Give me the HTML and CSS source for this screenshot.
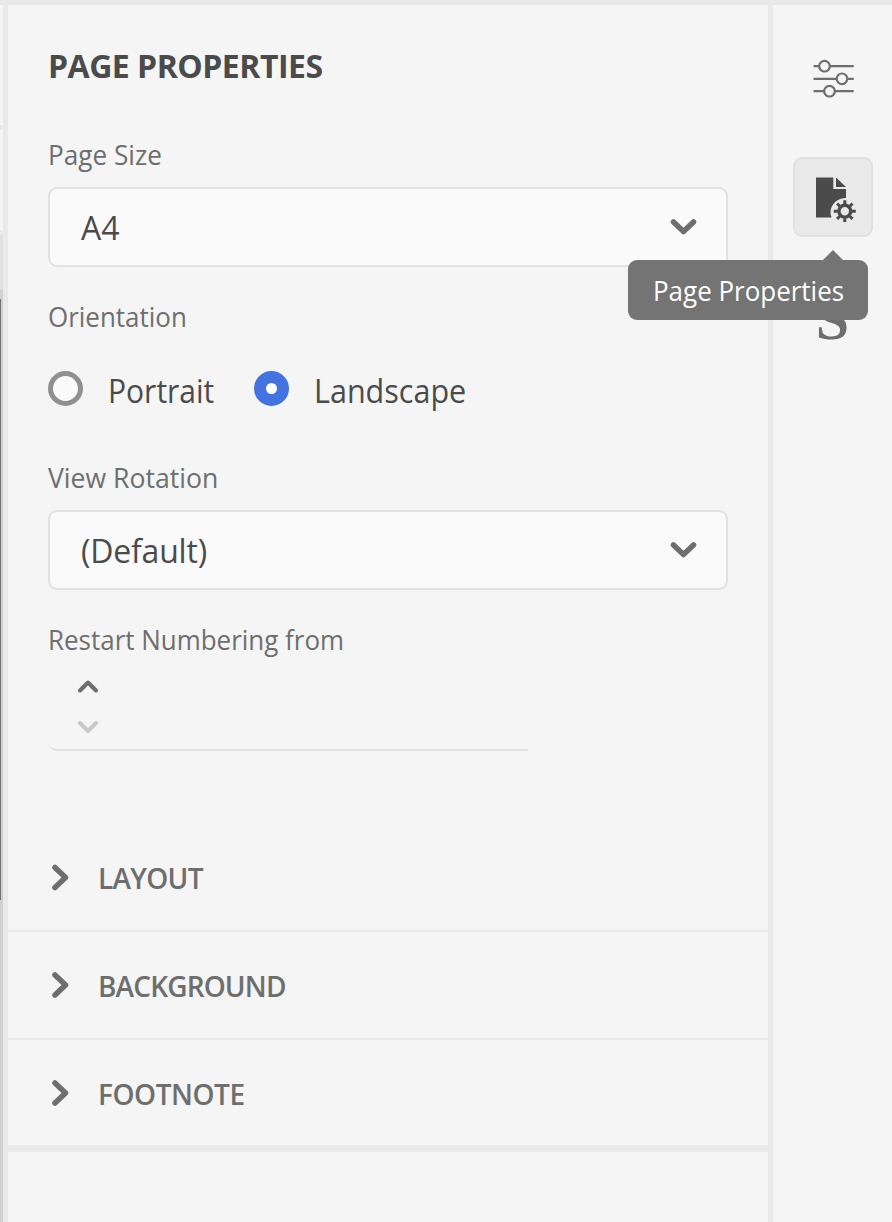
FILE: index.html
```html
<!DOCTYPE html>
<html lang="en">
<head>
<meta charset="utf-8">
<title>Page Properties</title>
<link rel="stylesheet" href="styles.css">
</head>
<body>
<div class="app">
  <aside class="canvas-edge">
    <div class="edge-block edge-head"></div>
    <div class="edge-block edge-tools"></div>
    <div class="edge-canvas"><div class="edge-scroll"></div></div>
  </aside>
  <div class="sidebar">
    <main class="panel">
      <form class="form">
        <h1 class="title">PAGE PROPERTIES</h1>
        <div class="label"><span class="narrow t-size">Page Size</span></div>
        <div class="select"><span>A4</span>
          <svg class="chevron" width="28" height="18" viewBox="0 0 28 18"><path d="M3.500 4l10 9.500l10-9.500"/></svg>
        </div>
        <div class="label label-orientation"><span class="narrow">Orientation</span></div>
        <div class="radios">
          <div class="radio"><span class="dot"></span><span class="narrow t-portrait">Portrait</span></div>
          <div class="radio"><span class="dot dot-on"></span><span class="narrow t-landscape">Landscape</span></div>
        </div>
        <div class="label label-rotation"><span class="narrow t-rotation">View Rotation</span></div>
        <div class="select"><span class="t-default">(Default)</span>
          <svg class="chevron" width="28" height="18" viewBox="0 0 28 18"><path d="M3.500 4l10 9.500l10-9.500"/></svg>
        </div>
        <div class="label label-restart"><span class="narrow">Restart Numbering from</span></div>
        <div class="stepper">
          <svg class="step" width="22" height="14" viewBox="0 0 22 14"><path d="M3 10.500l8-8l8 8"/></svg>
          <svg class="step step-off" width="22" height="14" viewBox="0 0 22 14"><path d="M3 3l8 8l8-8"/></svg>
        </div>
      </form>
      <section class="row"><svg class="arrow" width="20" height="28" viewBox="0 0 20 28"><path d="M5 3.500l10.500 10l-10.500 10"/></svg><span>LAYOUT</span></section>
      <section class="row"><svg class="arrow" width="20" height="28" viewBox="0 0 20 28"><path d="M5 3l10.500 10l-10.500 10"/></svg><span class="t-background">BACKGROUND</span></section>
      <section class="row row-last"><svg class="arrow" width="20" height="28" viewBox="0 0 20 28"><path d="M5 3l10.500 10l-10.500 10"/></svg><span class="t-footnote">FOOTNOTE</span></section>
    </main>
    <div class="panel panel-next"></div>
  </div>
  <nav class="rail">
    <div class="tool tool-sliders">
      <svg width="42" height="40" viewBox="0 0 42 40" fill="none" stroke="#6e6e6e" stroke-width="2.200">
        <path d="M.500 7.200h5.500M17 7.200h23.700M.500 19.800h22.800M34.500 19.800h6.200M.500 32.200h10.500M22 32.200h18.700"/>
        <circle cx="11.500" cy="7.200" r="5.300"/><circle cx="29" cy="19.800" r="5.300"/><circle cx="16.500" cy="32.200" r="5.300"/>
      </svg>
    </div>
    <div class="tool tool-active">
      <svg width="42" height="48" viewBox="0 0 42 48">
        <path fill="#4b4b4b" d="M1 3.500H18.300V15H31V24C23 24 15.500 30 15.500 38.500C15.500 40.300 15.900 42 16.500 43.500H1Z"/>
        <path fill="#4b4b4b" d="M21 3.500L31 13H21Z"/>
        <g transform="translate(29.800 37.200)" fill="none" stroke="#4b4b4b">
          <circle r="5.900" stroke-width="3.400"/>
          <path stroke-width="3" d="M0-7V-11M0 7V11M-7 0H-11M7 0H11M-5-5L-7.700-7.700M5-5L7.700-7.700M-5 5L-7.700 7.700M5 5L7.700 7.700"/>
        </g>
      </svg>
    </div>
    <div class="tool tool-style">S</div>
    <div class="tooltip"><span class="narrow">Page Properties</span></div>
  </nav>
</div>
</body>
</html>
```
FILE: styles.css
```css
* { box-sizing: border-box; }
body {
  margin: 0;
  background: #e9e9e9;
  font-family: "Open Sans", "Noto Sans", sans-serif;
  color: #4b4b4b;
}
.app {
  display: grid;
  grid-template-columns: 3px 760px 119px;
  column-gap: 5px;
  height: 1222px;
  padding-top: 5px;
  overflow: hidden;
}
.canvas-edge { display: flex; flex-direction: column; gap: 5px; }
.edge-block { background: #f5f5f5; }
.edge-head { height: 120px; }
.edge-tools { height: 100px; }
.edge-canvas {
  flex: 1;
  padding-top: 64px;
  background: linear-gradient(#e0e0e0 55px, #d0d0d0 55px);
}
.edge-scroll { width: 1px; height: 601px; background: #707070; }
.sidebar { display: flex; flex-direction: column; gap: 7px; }
.panel { background: #f5f5f5; }
.panel-next { flex: 1; }
.form { height: 819px; padding: 41px 40px 0; }
.title, .label { line-height: 40px; white-space: nowrap; }
.title { height: 40px; margin: 0 0 48px; font-size: 32px; font-weight: 700; letter-spacing: -0.5px; }
.label { height: 40px; margin-bottom: 13px; font-size: 28px; color: #6e6e6e; }
.label-orientation { margin-top: 29px; margin-bottom: 34px; }
.label-rotation { margin-top: 47px; }
.label-restart { margin-top: 29px; margin-bottom: 12px; }
.narrow { display: inline-block; transform: scaleX(0.927); transform-origin: left; }
.t-size { transform: scaleX(0.934); }
.t-rotation { transform: scaleX(0.95); }
.t-portrait { transform: scaleX(0.938); }
.t-landscape { transform: scaleX(0.954); }
.t-default { letter-spacing: -0.2px; }
.select {
  display: flex;
  align-items: center;
  justify-content: space-between;
  height: 80px;
  padding: 1px 28px 0 31px;
  border: 2px solid #e1e1e1;
  border-radius: 9px;
  background: #fafafa;
  font-size: 32px;
  line-height: 40px;
}
.chevron, .step, .arrow { fill: none; stroke: #6e6e6e; stroke-linecap: round; stroke-linejoin: round; }
.chevron { margin-top: -1px; stroke-width: 5.500px; }
.radios { display: flex; height: 40px; }
.radio { display: flex; flex: none; align-items: flex-start; gap: 25px; width: 206px; font-size: 32px; line-height: 41px; white-space: nowrap; }
.dot { flex: none; width: 35px; height: 35px; margin-top: 1px; border: 5px solid #909090; border-radius: 50%; background: #fafafa; }
.dot-on { border: 12px solid #4273e0; background: #fff; }
.stepper {
  display: flex;
  flex-direction: column;
  gap: 26px;
  width: 480px;
  height: 80px;
  padding: 9px 0 0 29px;
  border-bottom: 2px solid #e1e1e1;
  border-bottom-left-radius: 9px;
}
.step { stroke-width: 4px; }
.step-off { stroke: #c9c9c9; }
.row {
  display: flex;
  align-items: center;
  gap: 28px;
  height: 108px;
  padding: 2px 0 0 42px;
  border-bottom: 2px solid #e9e9e9;
  color: #6e6e6e;
  font-size: 28px;
  font-weight: 600;
  letter-spacing: -0.7px;
}
.row-last { height: 105px; border-bottom: 0; }
.arrow { stroke-width: 5.500px; }
.t-background { letter-spacing: -0.85px; }
.t-footnote { letter-spacing: -0.45px; }
.rail { position: relative; display: flex; flex-direction: column; align-items: center; background: #f5f5f5; }
.tool { display: flex; align-items: center; justify-content: center; width: 80px; height: 80px; }
.tool-sliders { margin-top: 34px; padding-left: 2px; }
.tool-active { margin-top: 38px; padding: 2px 0 0 7px; border: 2px solid #e1e1e1; border-radius: 9px; background: #e9e9e9; }
.tool-style { margin-top: 42px; font: bold 60px/86px "Liberation Serif", serif; color: #6e6e6e; }
.tooltip {
  position: absolute;
  top: 255px;
  right: 24px;
  width: 240px;
  height: 60px;
  padding-left: 25px;
  border-radius: 9px;
  background: #747474;
  color: #fff;
  font-size: 28px;
  line-height: 61px;
  white-space: nowrap;
}
.tooltip::before {
  content: "";
  position: absolute;
  top: -10px;
  right: 25px;
  border: 10px solid transparent;
  border-top: 0;
  border-bottom-color: #747474;
}
```
